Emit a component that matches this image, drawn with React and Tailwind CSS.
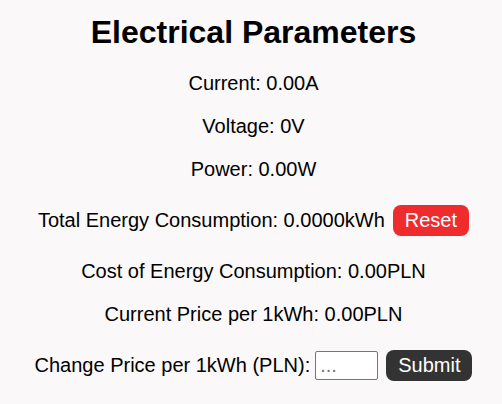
import React, { useState } from "react";

const App = () => {
  const [price, setPrice] = useState("");

  return (
    <div className="min-h-screen bg-[#faf8f9] text-black font-['Liberation_Sans',Arial,sans-serif] pl-[5px] pt-[14px]">
      <div className="flex flex-col items-center text-center">
        <h1 className="text-[32px] font-bold leading-[37px] mb-[21px]">
          Electrical Parameters
        </h1>
        <div className="flex flex-col items-center gap-5 text-[20px] leading-[23px]">
          <p>Current: 0.00A</p>
          <p>Voltage: 0V</p>
          <p>Power: 0.00W</p>
          <div className="h-[39px] flex items-center">
            <span>Total Energy Consumption: 0.0000kWh</span>
            <button className="ml-[8px] px-3 py-1 rounded-lg bg-[#ef2b2e] text-white leading-[23px]">
              Reset
            </button>
          </div>
          <p>Cost of Energy Consumption: 0.00PLN</p>
          <p>Current Price per 1kWh: 0.00PLN</p>
          <div className="h-[39px] flex items-center">
            <label htmlFor="price">Change Price per 1kWh (PLN):</label>
            <input
              id="price"
              type="text"
              value={price}
              onChange={(e) => setPrice(e.target.value)}
              placeholder="..."
              className="ml-[5px] w-[63px] h-[29px] border border-[#767676] rounded-[2px] bg-white px-[4px] text-[20px] placeholder:text-[#757575] outline-none"
            />
            <button className="ml-[8px] px-3 py-1 rounded-lg bg-[#333333] text-white leading-[23px]">
              Submit
            </button>
          </div>
        </div>
      </div>
    </div>
  );
};

export default App;
